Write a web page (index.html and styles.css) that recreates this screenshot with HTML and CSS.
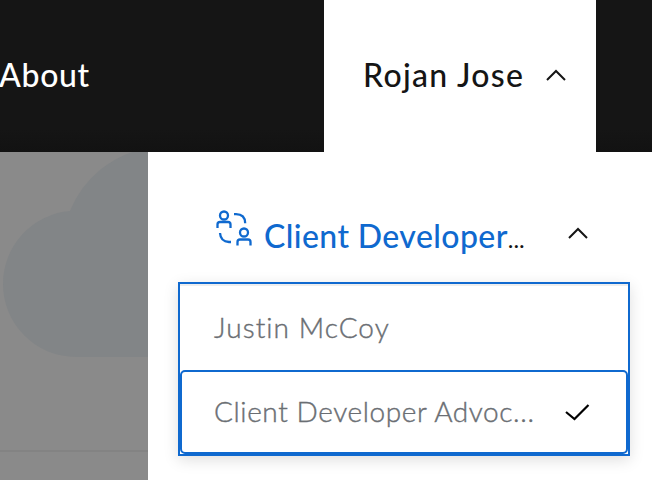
FILE: index.html
```html
<!DOCTYPE html>
<html lang="en">
<head>
<meta charset="utf-8">
<title>Account menu</title>
<link rel="stylesheet" href="styles.css">
</head>
<body>
<header class="header">
  <nav class="nav"><span class="nav-label">About</span></nav>
  <button class="account"><span class="account-name">Rojan Jose</span>
    <svg class="account-chevron" width="24" height="16" viewBox="0 0 24 16"><path d="M3 13 12 4l9 9"/></svg>
  </button>
</header>
<main class="content">
  <div class="backdrop">
    <svg class="cloud" width="148" height="328" viewBox="0 152 148 328"><path d="M148 357H76A73 73 0 0 1 3 284A73 73 0 0 1 70 211A103 103 0 0 1 148 148Z"/></svg>
  </div>
  <section class="panel">
    <div class="switcher">
      <svg class="people" width="36" height="38" viewBox="0 0 36 38">
        <circle cx="8" cy="5.5" r="4"/><path d="M1.5 18v-3.5q0-2.5 2.5-2.5h8q2.5 0 2.5 2.5V18M18 4.200h2q9 0 9.200 9M4 23q.5 8.500 9 9h2"/>
        <circle cx="28" cy="22.500" r="4"/><path d="M21.500 35.500V32q0-2.500 2.500-2.500h8q2.500 0 2.500 2.500v3.500"/>
      </svg>
      <span class="switcher-name"><span class="switcher-link">Client Developer</span><span class="dots">...</span></span>
      <svg class="switcher-chevron" width="24" height="16" viewBox="0 0 24 16"><path d="M3 13 12 4l9 9"/></svg>
    </div>
    <div class="list">
      <div class="option"><span class="option-name first">Justin McCoy</span></div>
      <div class="option selected"><span class="option-name second">Client Developer Advoc...</span>
        <svg class="check" width="28" height="22" viewBox="0 0 28 22"><path d="M3 11l8.500 7L25.500 4"/></svg>
      </div>
    </div>
  </section>
</main>
</body>
</html>
```
FILE: styles.css
```css
* { box-sizing: border-box; }
body { margin: 0; width: 652px; height: 480px; overflow: hidden; background: #fff; font-family: Lato, sans-serif; }
svg { display: block; flex: none; fill: none; stroke: #151515; stroke-width: 2; }
span { white-space: nowrap; }
.header { height: 152px; display: flex; background: linear-gradient(#151515 85%, #121212); }
.nav { width: 324px; display: flex; align-items: center; color: #fff; }
.nav-label { font-size: 32px; line-height: 40px; margin: 0 0 2px -1px; font-weight: 500; letter-spacing: .7px; }
.account { width: 272px; border: 0; padding: 0 0 0 39px; background: #fff; display: flex; align-items: center; font: 500 32px/40px Lato, sans-serif; color: #151515; }
.account-name { width: 161px; margin-bottom: 2px; text-align: left; letter-spacing: 1.3px; }
.account-chevron { margin: 0 0 2px 20px; }
.content { display: flex; height: 328px; }
.backdrop { width: 148px; background: linear-gradient(transparent 298px, #838383 298px, #838383 300px, transparent 300px) #8a8a8a; }
.cloud { fill: #828587; stroke: none; }
.panel { width: 504px; padding: 58px 22px 24px 30px; background: #fff; }
.switcher { height: 72px; display: flex; padding-left: 38px; }
.people { stroke: #0f69cf; stroke-width: 2.3; }
.switcher-name { width: 268px; margin: 6px 0 0 12px; font-size: 32px; line-height: 40px; font-weight: 500; letter-spacing: .4px; }
.switcher-link { color: #0f69cf; }
.dots { color: #151515; font-size: 24px; font-weight: 400; letter-spacing: 0; }
.switcher-chevron { margin: 15px 0 0 34px; }
.list { width: 452px; height: 174px; border: 2px solid #0f69cf; box-shadow: 0 4px 14px rgba(0, 0, 0, .13), inset 0 2px #eee; }
.option { height: 86px; padding: 2px 0 0 34px; display: flex; align-items: center; color: #6a6e73; }
.option-name { font-size: 28px; line-height: 38px; margin-bottom: 2px; font-weight: 300; -webkit-text-stroke: .4px #6a6e73; }
.first { letter-spacing: 1.05px; }
.second { width: 320px; letter-spacing: .6px; }
.selected { height: 84px; padding: 0 0 0 32px; border: 2px solid #0f69cf; border-radius: 5px; }
.check { margin: 0 0 1px 29px; stroke: #000; stroke-width: 2.200; }
```
